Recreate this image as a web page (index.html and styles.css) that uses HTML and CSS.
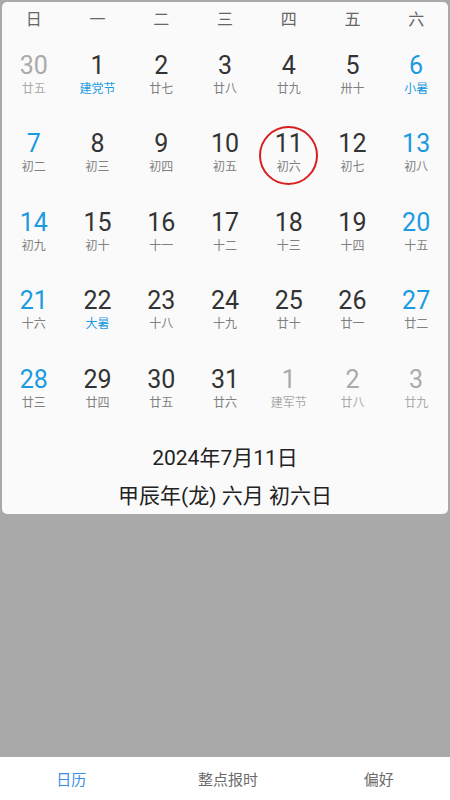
FILE: index.html
```html
<!DOCTYPE html>
<html lang="zh-CN">
<head>
    <meta charset="UTF-8">
    <meta name="viewport" content="width=device-width, initial-scale=1.0">
    <title>日历</title>
    <link rel="stylesheet" href="styles.css">
</head>
<body>
    <div class="card">
        <div class="week">
            <span>日</span><span>一</span><span>二</span><span>三</span><span>四</span><span>五</span><span>六</span>
        </div>
        <div class="grid">
            <div class="day other"><b>30</b><i>廿五</i></div>
            <div class="day"><b>1</b><i class="fest">建党节</i></div>
            <div class="day"><b>2</b><i>廿七</i></div>
            <div class="day"><b>3</b><i>廿八</i></div>
            <div class="day"><b>4</b><i>廿九</i></div>
            <div class="day"><b>5</b><i>卅十</i></div>
            <div class="day wk"><b>6</b><i class="fest">小暑</i></div>

            <div class="day wk"><b>7</b><i>初二</i></div>
            <div class="day"><b>8</b><i>初三</i></div>
            <div class="day"><b>9</b><i>初四</i></div>
            <div class="day"><b>10</b><i>初五</i></div>
            <div class="day today"><b>11</b><i>初六</i></div>
            <div class="day"><b>12</b><i>初七</i></div>
            <div class="day wk"><b>13</b><i>初八</i></div>

            <div class="day wk"><b>14</b><i>初九</i></div>
            <div class="day"><b>15</b><i>初十</i></div>
            <div class="day"><b>16</b><i>十一</i></div>
            <div class="day"><b>17</b><i>十二</i></div>
            <div class="day"><b>18</b><i>十三</i></div>
            <div class="day"><b>19</b><i>十四</i></div>
            <div class="day wk"><b>20</b><i>十五</i></div>

            <div class="day wk"><b>21</b><i>十六</i></div>
            <div class="day"><b>22</b><i class="fest">大暑</i></div>
            <div class="day"><b>23</b><i>十八</i></div>
            <div class="day"><b>24</b><i>十九</i></div>
            <div class="day"><b>25</b><i>廿十</i></div>
            <div class="day"><b>26</b><i>廿一</i></div>
            <div class="day wk"><b>27</b><i>廿二</i></div>

            <div class="day wk"><b>28</b><i>廿三</i></div>
            <div class="day"><b>29</b><i>廿四</i></div>
            <div class="day"><b>30</b><i>廿五</i></div>
            <div class="day"><b>31</b><i>廿六</i></div>
            <div class="day other"><b>1</b><i>建军节</i></div>
            <div class="day other"><b>2</b><i>廿八</i></div>
            <div class="day other"><b>3</b><i>廿九</i></div>
        </div>
        <p class="date">2024年7月11日</p>
        <p class="lunar">甲辰年(龙) 六月 初六日</p>
    </div>
    <div class="space"></div>
    <nav class="tabs">
        <span class="active">日历</span>
        <span>整点报时</span>
        <span>偏好</span>
    </nav>
</body>
</html>
```

FILE: styles.css
```css
body {
    margin: 0;
    height: 800px;
    background-color: #aaa9aa;
    font-family: Roboto, "Noto Sans CJK SC", sans-serif;
    display: flex;
    flex-direction: column;
}

.card {
    margin: 2px 2px 0 2px;
    height: 512px;
    box-sizing: border-box;
    background-color: #fafafa;
    border-radius: 5px;
    padding-bottom: 4px;
}

.week {
    display: grid;
    grid-template-columns: repeat(7, 1fr);
    height: 40px;
    padding-bottom: 0;
    box-sizing: border-box;
    align-items: center;
    text-align: center;
    font-size: 16px;
    line-height: 16px;
    padding-bottom: 4px;
    color: #666;
}

.grid {
    display: grid;
    grid-template-columns: repeat(7, 1fr);
    grid-auto-rows: 78.4px;
}

.day {
    position: relative;
    display: flex;
    flex-direction: column;
    align-items: center;
    padding-top: 10px;
}

.day b {
    font-weight: normal;
    font-size: 25px;
    line-height: 28px;
    color: #333;
}

.day i {
    font-style: normal;
    font-size: 12px;
    line-height: 16px;
    margin-top: 1px;
    color: #808080;
}

.day.wk b {
    color: #1a9be0;
}

.day i.fest {
    color: #1a9be0;
}

.day.other b {
    color: #aaa;
}

.day.other i {
    color: #aaa;
}

.day.today::after {
    content: "";
    position: absolute;
    top: 6px;
    left: 50%;
    width: 55px;
    height: 55px;
    margin-left: -29.5px;
    border: 2px solid #d81e1e;
    border-radius: 50%;
}

.date, .lunar {
    margin: 10px 0 0 0;
    text-align: center;
    font-size: 21px;
    line-height: 28px;
    color: #222;
}

.space {
    flex: 1;
}

.tabs {
    height: 43px;
    background-color: #fff;
    display: flex;
    align-items: center;
    font-size: 15px;
    color: #6a6a6a;
}

.tabs span {
    flex: 1;
    text-align: center;
}

.tabs span:first-child {
    padding-right: 14px;
}

.tabs span:last-child {
    padding-left: 8px;
}

.tabs .active {
    color: #3a8ee6;
}
```
